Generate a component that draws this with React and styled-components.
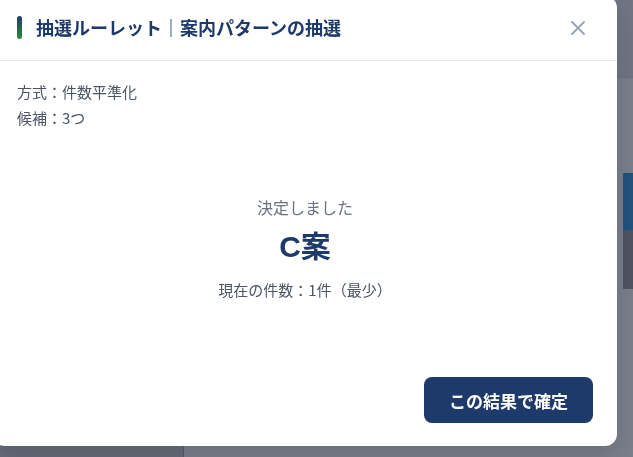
import React from "react";
import styled, { createGlobalStyle } from "styled-components";

const GlobalStyle = createGlobalStyle`
  html, body {
    margin: 0;
    padding: 0;
    overflow: hidden;
  }
  body {
    font-family: "Noto Sans CJK JP", "Noto Sans", sans-serif;
    background: #757b88;
    text-spacing-trim: space-all;
  }
`;

const Page = styled.div`
  width: 100vw;
  height: 100vh;
  display: flex;
  flex-direction: column;
  background: linear-gradient(90deg, #6a7080 0%, #787e8b 100%);
`;

const PageHeader = styled.div`
  height: 77px;
  flex-shrink: 0;
  background: #707684;
  border-bottom: 1px solid #6a707d;
`;

const PageBody = styled.div`
  flex: 1;
  display: flex;
`;

const Sidebar = styled.div`
  width: 183px;
  flex-shrink: 0;
  border-right: 1px solid #555b68;
  background: #666c7a;
`;

const Main = styled.div`
  flex: 1;
  display: flex;
  justify-content: flex-end;
  padding-top: 95px;
  background: #7a808c;
`;

const SideCard = styled.div`
  width: 10px;
  height: 116px;
  display: flex;
  flex-direction: column;
`;

const CardPart = styled.div`
  height: ${(p) => p.h}px;
  background: ${(p) => p.color};
`;

const Modal = styled.div`
  position: fixed;
  left: -7px;
  top: -4px;
  width: 624px;
  height: 450px;
  background: #ffffff;
  border-radius: 12px;
  display: flex;
  flex-direction: column;
  box-shadow: 0 10px 30px rgba(0, 0, 0, 0.15);
`;

const Header = styled.div`
  height: 65px;
  box-sizing: border-box;
  padding: 0 24px;
  display: flex;
  align-items: center;
  justify-content: space-between;
  border-bottom: 1px solid #e9ecef;
`;

const TitleWrap = styled.div`
  display: flex;
  align-items: center;
  gap: 14px;
`;

const Accent = styled.span`
  width: 5px;
  height: 23px;
  border-radius: 3px;
  background: linear-gradient(180deg, #1e3a6b 0%, #2e8b3e 100%);
`;

const Title = styled.h2`
  margin: 0;
  font-size: 18px;
  font-weight: 700;
  color: #1e3a6b;
  line-height: 1.3;
`;

const CloseButton = styled.button`
  width: 30px;
  height: 30px;
  border: none;
  background: transparent;
  padding: 0;
  display: flex;
  align-items: center;
  justify-content: center;
  cursor: pointer;
  color: #94a3b8;
`;

const Body = styled.div`
  flex: 1;
  padding: 18px 24px 0;
`;

const InfoLine = styled.div`
  font-size: 15px;
  line-height: 26px;
  color: #4b5563;
`;

const Result = styled.div`
  margin-top: 66px;
  text-align: center;
`;

const ResultLabel = styled.div`
  font-size: 16px;
  line-height: 20px;
  color: #6b7280;
`;

const ResultValue = styled.div`
  margin-top: 10px;
  font-size: 30px;
  line-height: 40px;
  font-weight: 700;
  color: #1e3a6b;
  font-family: "Liberation Sans", "Noto Sans CJK JP", sans-serif;
`;

const ResultNote = styled.div`
  margin-top: 13px;
  font-size: 15px;
  line-height: 20px;
  color: #4b5563;
`;

const Footer = styled.div`
  padding: 0 24px 23px;
  display: flex;
  justify-content: flex-end;
`;

const PrimaryButton = styled.button`
  height: 46px;
  padding: 0 25px;
  border: none;
  border-radius: 8px;
  background: #1e3a6b;
  color: #ffffff;
  font-family: "Noto Sans CJK JP", sans-serif;
  font-size: 17px;
  font-weight: 700;
  cursor: pointer;
`;

function CloseIcon() {
  return (
    <svg width="14" height="14" viewBox="0 0 14 14" fill="none">
      <path
        d="M1 1L13 13M13 1L1 13"
        stroke="currentColor"
        strokeWidth="1.8"
        strokeLinecap="round"
      />
    </svg>
  );
}

export default function App() {
  return (
    <>
      <GlobalStyle />
      <Page>
        <PageHeader />
        <PageBody>
          <Sidebar />
          <Main>
            <SideCard>
              <CardPart h={57} color="#23527f" />
              <CardPart h={59} color="#4e5462" />
            </SideCard>
          </Main>
        </PageBody>
      </Page>
      <Modal>
        <Header>
          <TitleWrap>
            <Accent />
            <Title>抽選ルーレット｜案内パターンの抽選</Title>
          </TitleWrap>
          <CloseButton aria-label="閉じる">
            <CloseIcon />
          </CloseButton>
        </Header>
        <Body>
          <InfoLine>方式：件数平準化</InfoLine>
          <InfoLine>候補：3つ</InfoLine>
          <Result>
            <ResultLabel>決定しました</ResultLabel>
            <ResultValue>C案</ResultValue>
            <ResultNote>現在の件数：1件（最少）</ResultNote>
          </Result>
        </Body>
        <Footer>
          <PrimaryButton>この結果で確定</PrimaryButton>
        </Footer>
      </Modal>
    </>
  );
}
